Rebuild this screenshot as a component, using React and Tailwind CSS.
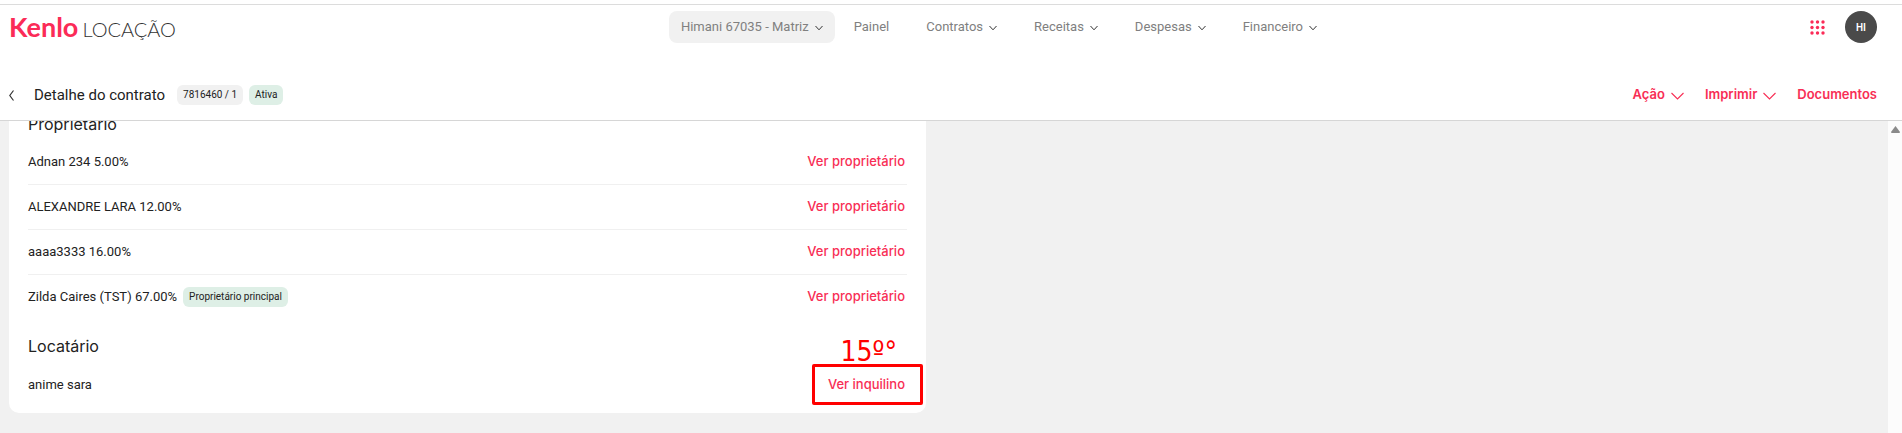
import React from 'react';

const menuItems = ['Contratos', 'Receitas', 'Despesas', 'Financeiro'];

const owners = [
  { name: 'Adnan 234', share: '5.00%' },
  { name: 'ALEXANDRE LARA', share: '12.00%' },
  { name: 'aaaa3333', share: '16.00%' },
  { name: 'Zilda Caires (TST)', share: '67.00%', main: true },
];

const SmallChevron = () => (
  <svg className="w-2 h-2 mt-0.5" viewBox="0 0 8 8" fill="none" stroke="#333" strokeWidth="1">
    <path d="M0.5 2L4 5.8L7.5 2" />
  </svg>
);

const WideChevron = () => (
  <svg className="w-[13px] h-2 mt-0.5" viewBox="0 0 13 8" fill="none" stroke="currentColor" strokeWidth="1.1">
    <path d="M0.5 1L6.5 7L12.5 1" />
  </svg>
);

const Logo = () => (
  <a href="#" aria-label="Kenlo Locação" className="flex items-baseline gap-1 h-8 font-['Lato',sans-serif]">
    <span className="text-[27px] leading-8 font-bold text-[#fb2b57]">Kenlo</span>
    <span className="text-[20px] leading-8 font-light text-[#333]">LOCAÇÃO</span>
  </a>
);

const AppsIcon = () => (
  <svg className="w-[15px] h-[15px]" viewBox="0 0 15 15" fill="#fb2b57">
    {[2, 7.5, 13].map((y) =>
      [2, 7.5, 13].map((x) => <circle key={`${x}-${y}`} cx={x} cy={y} r="1.7" />)
    )}
  </svg>
);

const Header = () => (
  <header className="flex items-center justify-between h-[65px] pt-1.5 pb-[27px] pl-[9px] pr-[25px] shrink-0">
    <Logo />
    <nav className="flex items-center text-[13px] text-[#808080]">
      <button type="button" className="flex items-center gap-1.5 h-8 px-3 mr-[19px] rounded-lg bg-[#f1f1f1]">
        Himani 67035 - Matriz
        <SmallChevron />
      </button>
      <div className="flex items-center gap-[37px]">
        <a href="#">Painel</a>
        {menuItems.map((item) => (
          <button key={item} type="button" className="flex items-center gap-1.5">
            {item}
            <SmallChevron />
          </button>
        ))}
      </div>
    </nav>
    <div className="flex items-center gap-5">
      <button type="button" aria-label="Aplicativos">
        <AppsIcon />
      </button>
      <button type="button" className="w-8 h-8 rounded-full bg-[#4a4a4a] text-white text-[10px] font-semibold">
        HI
      </button>
    </div>
  </header>
);

const Toolbar = () => (
  <div className="flex items-center justify-between h-[51px] pl-[9px] pr-[25px] border-b border-[#d6d6d6] shrink-0">
    <div className="flex items-center">
      <button type="button" aria-label="Voltar">
        <svg className="w-[5px] h-[11px]" viewBox="0 0 5 11" fill="none" stroke="#333" strokeWidth="1.2">
          <path d="M4.5 0.5L0.8 5.5L4.5 10.5" />
        </svg>
      </button>
      <h1 className="ml-5 mr-3 text-[15px]">Detalhe do contrato</h1>
      <span className="h-5 px-1.5 mr-1.5 rounded-md bg-[#f1f1f1] text-[10px] leading-5">7816460 / 1</span>
      <span className="h-5 px-1.5 rounded-md bg-[#deefe6] text-[10px] leading-5">Ativa</span>
    </div>
    <div className="flex items-center gap-[21px] font-['Inter',sans-serif] text-[13px] font-semibold text-[#f82e55]">
      <button type="button" className="flex items-center gap-1.5">
        Ação
        <WideChevron />
      </button>
      <button type="button" className="flex items-center gap-1.5">
        Imprimir
        <WideChevron />
      </button>
      <a href="#">Documentos</a>
    </div>
  </div>
);

const ContractCard = () => (
  <section className="-mt-[13px] px-[19px] pb-1.5 rounded-b-[10px] bg-white text-[13px]">
    <h2 className="h-8 font-['Inter',sans-serif] text-[16px] leading-8">Proprietário</h2>
    <ul>
      {owners.map((owner) => (
        <li
          key={owner.name}
          className="flex items-center justify-between h-[45px] pr-0.5 border-b border-[#f0f0f0] last:border-transparent"
        >
          <div className="flex items-center gap-1.5">
            <span>{owner.name} {owner.share}</span>
            {owner.main && (
              <span className="h-5 px-1.5 rounded-md bg-[#deefe6] text-[10px] leading-5">
                Proprietário principal
              </span>
            )}
          </div>
          <a href="#" className="font-['Inter',sans-serif] font-medium text-[#f82e55]">Ver proprietário</a>
        </li>
      ))}
    </ul>

    <h2 className="h-8 mt-2.5 font-['Inter',sans-serif] text-[16px] leading-8">Locatário</h2>
    <div className="flex items-center justify-between h-[45px] pr-0.5">
      <span>anime sara</span>
      <div className="relative">
        <a href="#" className="font-['Inter',sans-serif] font-medium text-[#f82e55]">Ver inquilino</a>
        <span className="absolute -left-4 -right-[18px] -inset-y-[11px] border-3 border-[#ff0000] rounded-xs pointer-events-none" />
        <span className="absolute right-2 bottom-[26px] font-['DejaVu_Sans_Condensed','DejaVu_Sans',sans-serif] text-[28px] leading-8 text-[#ff0000] whitespace-nowrap">
          15º°
        </span>
      </div>
    </div>
  </section>
);

const App = () => {
  return (
    <div className="flex flex-col h-screen overflow-hidden bg-white font-['Roboto',sans-serif] text-[#222]">
      <div className="h-[5px] shrink-0 border-b border-[#dcdcdc]" />
      <Header />
      <Toolbar />
      <div className="flex flex-1 min-h-0">
        <main className="grid flex-1 grid-cols-2 items-start gap-5 overflow-hidden pl-[9px] pr-[25px] bg-[#f1f1f1]">
          <div>
            <ContractCard />
            <section className="h-40 mt-5 rounded-[10px] bg-white" />
          </div>
        </main>
        <div className="flex justify-center w-3.5 pt-[5px] bg-[#fcfcfc]">
          <svg className="w-[9px] h-[7px]" viewBox="0 0 9 7" fill="#8a8a8a">
            <path d="M4.5 0L9 6Q9 7 8 7H1Q0 7 0 6Z" />
          </svg>
        </div>
      </div>
    </div>
  );
};

export default App;
